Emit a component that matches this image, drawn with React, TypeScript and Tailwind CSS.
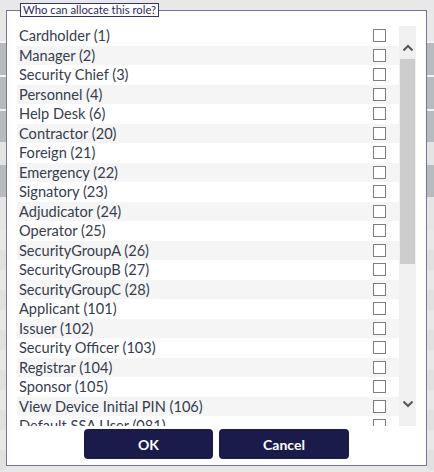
import React from "react";

const roles = [
  "Cardholder (1)",
  "Manager (2)",
  "Security Chief (3)",
  "Personnel (4)",
  "Help Desk (6)",
  "Contractor (20)",
  "Foreign (21)",
  "Emergency (22)",
  "Signatory (23)",
  "Adjudicator (24)",
  "Operator (25)",
  "SecurityGroupA (26)",
  "SecurityGroupB (27)",
  "SecurityGroupC (28)",
  "Applicant (101)",
  "Issuer (102)",
  "Security Officer (103)",
  "Registrar (104)",
  "Sponsor (105)",
  "View Device Initial PIN (106)",
  "Default SSA User (081)",
];

// the page behind the dialog, peeking out at the edges
function EdgeStrip({ width }: { width: string }) {
  return (
    <div className={`${width} flex flex-col shrink-0`}>
      <div className="h-[41px] bg-[#e8e8e8]" />
      <div className="h-[2px] bg-[#f2f2f2]" />
      <div className="h-[32px] bg-[#b6bbbd]" />
      <div className="h-[2px] bg-[#f2f2f2]" />
      <div className="h-[32px] bg-[#b6bbbd]" />
      <div className="h-[2px] bg-[#f2f2f2]" />
      <div className="h-[31px] bg-[#b6bbbd]" />
      <div className="h-[23px] bg-[#e4e4e4]" />
      <div className="h-[32px] bg-[#b6bbbd]" />
      <div className="h-[33px] bg-[#e6e6e6]" />
      {Array.from({ length: 12 }).map((_, i) => (
        <div
          key={i}
          className={`h-[20px] ${i % 2 === 0 ? "bg-[#e9e9e9]" : "bg-[#e1e1e1]"}`}
        />
      ))}
    </div>
  );
}

function Chevron({ up }: { up?: boolean }) {
  return (
    <svg width="12" height="8" viewBox="0 0 12 8">
      <path
        d={up ? "M1.5 6.5 L6 2 L10.5 6.5" : "M1.5 1.5 L6 6 L10.5 1.5"}
        fill="none"
        stroke="#555"
        strokeWidth="2"
      />
    </svg>
  );
}

export default function App() {
  return (
    <div className="w-[434px] h-[472px] bg-[#e8e8e8] flex overflow-hidden font-['Lato',sans-serif]">
      <EdgeStrip width="w-[6px]" />

      <fieldset className="w-[421px] h-[463px] mt-[3px] border border-[#77729f] bg-white pl-[10px] flex flex-col shrink-0">
        <legend className="ml-[3px] px-[2px] h-[14px] border border-[#34346a] bg-white text-[11.3px] leading-[12px] text-[#2c2c5c]">
          Who can allocate this role?
        </legend>

        <div className="flex mt-[9px] h-[400px]">
          {/* role list */}
          <div className="w-[382px] h-[400px] overflow-hidden">
            {roles.map((r, i) => (
              <div
                key={r}
                className={`h-[19.5px] flex items-center justify-between pl-[2px] pr-[13px] pt-[2px] ${
                  i % 2 === 1 ? "bg-[#f5f5f5]" : "bg-white"
                }`}
              >
                <span className="text-[14.6px] leading-none text-[#363d4c]">{r}</span>
                <span className="w-[13px] h-[13px] -mt-[2px] border-[1.5px] border-[#7d7d7d] bg-white" />
              </div>
            ))}
          </div>

          {/* scrollbar */}
          <div className="w-[17px] bg-[#f0f0f0] flex flex-col">
            <div className="h-[33px] flex justify-center pt-[18px]">
              <Chevron up />
            </div>
            <div className="h-[205px] mx-[1px] bg-[#cdcdcd]" />
            <div className="flex-1" />
            <div className="h-[34px] flex justify-center pt-[8px]">
              <Chevron />
            </div>
          </div>
        </div>

        <div className="flex justify-center gap-[6px] mt-[3px] pr-[10px]">
          <button className="w-[129px] h-[30px] rounded-[4px] bg-[#1b1b4b] text-white text-[14px] font-bold">
            OK
          </button>
          <button className="w-[130px] h-[30px] rounded-[4px] bg-[#1b1b4b] text-white text-[14px] font-bold">
            Cancel
          </button>
        </div>
      </fieldset>

      <EdgeStrip width="w-[7px]" />
    </div>
  );
}
